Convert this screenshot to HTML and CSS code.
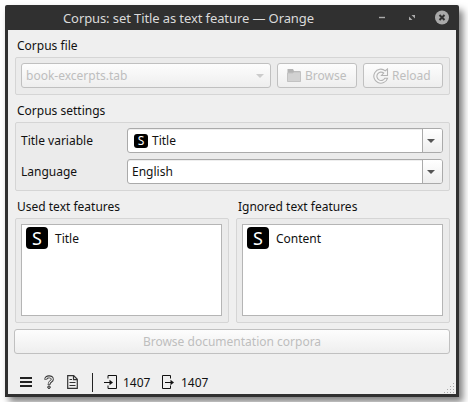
FILE: index.html
```html
<!DOCTYPE html>
<html lang="en">
<head>
<meta charset="utf-8">
<title>Corpus</title>
<link rel="stylesheet" href="styles.css">
</head>
<body>
<div class="window">
  <header class="titlebar">
    <h1>Corpus: set Title as text feature — Orange</h1>
    <svg class="controls" width="74" height="16" viewBox="0 0 74 16">
      <path d="M3 7.500h6" stroke="#aaa" stroke-width="1.400"/>
      <path d="M35.500 5h3.500v3.500zM33 6.500v3.500h3.500z" fill="#aaa"/>
      <circle cx="66" cy="7.500" r="7" fill="#a9a9a9"/>
      <path d="M63.500 5l5 5m0-5l-5 5" stroke="#303030" stroke-width="2"/>
    </svg>
  </header>
  <main>
    <h2>Corpus file</h2>
    <section class="group files">
      <div class="combo disabled file"><span>book-excerpts.tab</span><i class="arrow"></i></div>
      <button class="btn" disabled>
        <svg class="folder" width="14" height="13" viewBox="0 0 14 13"><path d="M.5 0h5.500l1 2h6.500v10.500H.5z" fill="#b4b4b4"/><path d="M.5 4l5.500 0 1-1h6.500v9.500H.5z" fill="#d2d2d2" stroke="#c2c2c2"/></svg>
        <span>Browse</span>
      </button>
      <button class="btn reload" disabled>
        <svg width="16" height="16" viewBox="0 0 16 16"><path d="M12.300 2.800L14.500 1v6.500H8.500l2.200-2.500A4.200 4.200 0 1 0 11.800 10.300h2.700A7 7 0 1 1 12.300 2.800z" fill="#f7f7f7" stroke="#b4b4b4" stroke-width="1.100"/></svg>
        <span>Reload</span>
      </button>
    </section>
    <h2>Corpus settings</h2>
    <section class="group settings">
      <label>Title variable</label>
      <div class="combo"><b class="badge small">S</b><span>Title</span><i class="drop"><i class="arrow"></i></i></div>
      <label>Language</label>
      <div class="combo"><span>English</span><i class="drop"><i class="arrow"></i></i></div>
    </section>
    <div class="features">
      <div>
        <h2>Used text features</h2>
        <section class="group"><div class="list"><b class="badge">S</b><span>Title</span></div></section>
      </div>
      <div>
        <h2>Ignored text features</h2>
        <section class="group"><div class="list"><b class="badge">S</b><span>Content</span></div></section>
      </div>
    </div>
    <button class="btn docs" disabled><span>Browse documentation corpora</span></button>
    <footer>
      <svg class="menu" width="12" height="12" viewBox="0 0 12 12"><path d="M0 2h12M0 6h12M0 10h12" stroke="#222" stroke-width="1.800"/></svg>
      <svg class="help" width="10" height="14" viewBox="0 0 10 14"><path d="M1.800 4.600C1.500.8 8.500.8 8.300 4.300 8.200 6.600 5 6.300 5 9.700" fill="none" stroke="#333" stroke-width="3"/><path d="M1.800 4C2 1.300 8.300 1.300 8.300 4.200 8.200 6.400 5 6.300 5 9" fill="none" stroke="#efefef" stroke-width="1.200"/><circle cx="5" cy="12.200" r="1.300" fill="#aaa" stroke="#333"/></svg>
      <svg class="doc" width="11" height="14" viewBox="0 0 11 14"><path d="M.7.700h6l3.600 3.600v9H.7zM6.500.700v4h4" fill="none" stroke="#333" stroke-width="1.200"/><path d="M2.500 4.500h2.500M2.500 7.500h6M2.500 10.500h6" stroke="#333"/></svg>
      <i class="rule"></i>
      <svg class="in" width="13" height="14" viewBox="0 0 13 14"><path d="M4 3.500v-3h8.500v13H4v-3" fill="none" stroke="#111"/><path d="M0 7.500h6" stroke="#111"/><path d="M5.500 4.800L9 7.500l-3.500 2.700z" fill="#111"/></svg>
      <span class="count">1407</span>
      <svg class="out" width="13" height="14" viewBox="0 0 13 14"><path d="M8.500 3.500v-3H.5v13h8v-3" fill="none" stroke="#111"/><path d="M3 7.500h6" stroke="#111"/><path d="M8.500 4.800L12 7.500l-3.500 2.700z" fill="#111"/></svg>
      <span class="count">1407</span>
      <svg class="grip" width="10" height="10" viewBox="0 0 10 10"><path d="M9 0h1v1H9zM6 3h1v1H6zM9 3h1v1H9zM3 6h1v1H3zM6 6h1v1H6zM9 6h1v1H9zM0 9h1v1H0zM3 9h1v1H3zM6 9h1v1H6zM9 9h1v1H9z" fill="#aaa"/></svg>
    </footer>
  </main>
</div>
</body>
</html>
```
FILE: styles.css
```css
* { box-sizing: border-box; }
body { margin: 0; padding: 5px; background: #fff; font: 12px/18px "Noto Sans", sans-serif; color: #111; overflow: hidden; }
h1, h2 { margin: 0; font: inherit; }
svg { display: block; flex: none; }
.window { width: 454px; height: 392px; background: #303030; border-radius: 2px 2px 0 0; padding: 0 3px 3px; box-shadow: 4px 5px 7px rgba(0,0,0,.5); }
.titlebar { height: 25px; display: flex; align-items: center; justify-content: space-between; padding: 0 6px 0 55px; color: #dadada; }
.titlebar h1 { font-size: 13px; letter-spacing: -.1px; white-space: nowrap; }
main { height: 364px; background: #efefef; padding: 6px 6px 0 7px; display: flex; flex-direction: column; }
h2 { height: 18px; padding: 1px 0 0 2px; margin-bottom: 3px; white-space: nowrap; }
.group { border: 1px solid #d5d5d5; border-radius: 2px; background: #ebebeb; padding: 5px; }
.files { height: 38px; display: flex; gap: 6px; margin-bottom: 6px; }
.combo { height: 25px; border: 1px solid #aaa; border-radius: 3px; background: #fff; box-shadow: inset 0 1px #eee; display: flex; align-items: center; padding-left: 4px; min-width: 0; }
.combo span { flex: 1; }
.arrow { width: 0; height: 0; border: 4px solid transparent; border-top-color: #555; border-bottom: 0; }
.drop { width: 20px; height: 23px; border-left: 1px solid #aaa; border-radius: 0 2px 2px 0; background: linear-gradient(#fff, #eee); display: flex; align-items: center; justify-content: center; padding-right: 3px; }
.file { width: 250px; }
.disabled, .btn { border: 1px solid #c0c0c0; border-radius: 3px; background: linear-gradient(#fdfdfd, #eee); color: #bebebe; box-shadow: none; }
.disabled .arrow { border-top-color: #ccc; margin-right: 6px; }
.btn { font: inherit; width: 80px; height: 25px; padding: 0 0 0 9px; display: flex; align-items: center; gap: 4px; }
.folder { margin-bottom: 1px; }
.reload { gap: 3px; }
.settings { height: 69px; display: grid; grid-template-columns: 106px 316px; grid-auto-rows: 25px; row-gap: 6px; align-items: center; margin-bottom: 6px; }
.badge { width: 22px; height: 22px; border-radius: 4px; background: #000; color: #fff; font-weight: 400; font-size: 18px; line-height: 22px; text-align: center; flex: none; }
.badge.small { width: 14px; height: 14px; border-radius: 3px; font-size: 12px; line-height: 14px; margin: 0 4px 0 2px; }
.features { display: grid; grid-template-columns: 214px 214px; gap: 7px; }
.features .group { height: 105px; }
.list { height: 92px; width: 201px; border: 1px solid #b5b5b5; background: #fff; padding: 2px 4px; display: flex; align-items: flex-start; gap: 7px; }
.list span { margin-top: 3px; }
.docs { width: 436px; margin: 6px 0 0 -1px; justify-content: center; padding: 0; flex: none; }
footer { display: flex; align-items: center; height: 20px; margin: 18px -4px 0 5px; flex: none; }
.help { margin-left: 12px; }
.doc { margin-left: 13px; }
.rule { width: 1px; height: 19px; background: #222; margin-left: 14px; }
.in { margin-left: 11px; }
.count { width: 27px; margin: 0 12px 0 6px; padding-top: 1px; }
.out + .count { margin-right: auto; }
.grip { align-self: flex-end; margin-bottom: -1px; }
```
